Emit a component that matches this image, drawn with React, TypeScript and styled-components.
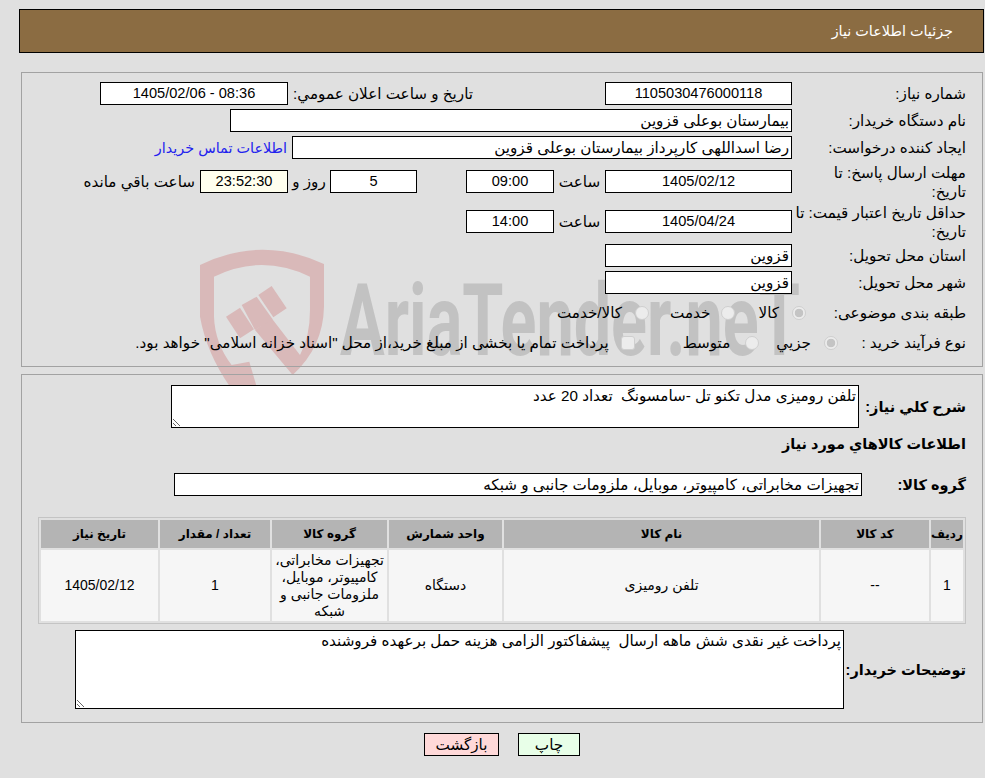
import React from "react";
import styled, { createGlobalStyle } from "styled-components";

const Global = createGlobalStyle`
  html, body { margin: 0; padding: 0; background: #e0e0e0; }
  body { font-family: "Liberation Sans", "DejaVu Sans", sans-serif; font-size: 15.2px; color: #000; }
`;

const Page = styled.div`
  position: relative;
  width: 985px;
  height: 778px;
  overflow: hidden;
  direction: rtl;
  background: #e0e0e0;
`;

const Watermark = styled.svg`
  position: absolute;
  left: 190px;
  top: 240px;
  z-index: 0;
`;

const Content = styled.div`
  position: relative;
  z-index: 1;
  display: flex;
  flex-direction: column;
  padding-top: 9px;
`;

const Header = styled.header`
  height: 42px;
  margin: 0 1px 0 19px;
  padding-right: 30px;
  border: 1px solid #000;
  background: #8b6c42;
  color: #fff;
  font-size: 14.4px;
  line-height: 43px;
`;

const Panel = styled.section<{ $h: number; $top: number; $pt: number }>`
  box-sizing: border-box;
  height: ${(p) => p.$h}px;
  margin: ${(p) => p.$top}px 2px 0 21px;
  padding: ${(p) => p.$pt}px 16px 0 17px;
  border: 1px solid #a2a2a2;
`;

const Row = styled.div<{ $h?: number; $mb?: number; $mt?: number }>`
  display: flex;
  align-items: center;
  height: ${(p) => p.$h || 23}px;
  margin-top: ${(p) => p.$mt ?? 0}px;
  margin-bottom: ${(p) => p.$mb ?? 4}px;
`;

const Label = styled.div<{ $w?: number }>`
  flex: none;
  width: ${(p) => p.$w ?? 174}px;
  line-height: 19px;
  white-space: nowrap;
`;

const BoldLabel = styled.div<{ $w: number }>`
  flex: none;
  width: ${(p) => p.$w}px;
  font-size: 14.5px;
  font-weight: 700;
  white-space: nowrap;
`;

const Field = styled.div<{ $w: number; $center?: boolean; $ms?: number; $bg?: string }>`
  flex: none;
  box-sizing: border-box;
  width: ${(p) => p.$w}px;
  height: 23px;
  margin-inline-start: ${(p) => p.$ms ?? 0}px;
  padding: 0 2px;
  border: 1px solid #000;
  background: ${(p) => p.$bg || "#fff"};
  font-size: ${(p) => (p.$center ? 14.6 : 15.2)}px;
  line-height: 21px;
  text-align: ${(p) => (p.$center ? "center" : "right")};
  white-space: nowrap;
  overflow: hidden;
`;

const Inline = styled.span<{ $w?: number; $ms?: number; $center?: boolean }>`
  flex: none;
  width: ${(p) => (p.$w ? `${p.$w}px` : "auto")};
  margin-inline-start: ${(p) => p.$ms ?? 0}px;
  text-align: ${(p) => (p.$center ? "center" : "right")};
  white-space: nowrap;
`;

const ContactLink = styled.a`
  margin-inline-start: 5px;
  color: #2222ee;
  font-size: 14.4px;
  text-decoration: none;
  white-space: nowrap;
`;

const Radio = styled.input<{ $ms?: number }>`
  flex: none;
  appearance: none;
  box-sizing: border-box;
  width: 14px;
  height: 14px;
  margin: 0;
  margin-inline-start: ${(p) => p.$ms ?? 0}px;
  border: 1px solid #cfcfcf;
  border-radius: 50%;
  background: #ececec;
  &:checked {
    background: radial-gradient(circle, #c4c4c4 0 4px, #ececec 4.6px);
  }
  &[type="checkbox"] {
    border-radius: 3px;
  }
`;

const NoteArea = styled.textarea<{ $w: number; $h: number }>`
  flex: none;
  box-sizing: border-box;
  display: block;
  width: ${(p) => p.$w}px;
  height: ${(p) => p.$h}px;
  padding: 1px 2px;
  border: 1px solid #000;
  border-radius: 0;
  outline: none;
  background: #fff;
  color: #000;
  font: inherit;
  direction: rtl;
`;

const SectionTitle = styled.h2`
  margin: 0;
  height: 22px;
  font-size: 14.5px;
  line-height: 22px;
  font-weight: 700;
`;

const Table = styled.table`
  box-sizing: border-box;
  width: 928px;
  table-layout: fixed;
  border: 1px solid #c4c4c4;
  border-spacing: 2px;
  font-size: 14px;
`;

const Th = styled.th<{ $w: number }>`
  width: ${(p) => p.$w}px;
  height: 28px;
  padding: 0;
  background: #b4b4b4;
  font-size: 12px;
  font-weight: 700;
`;

const Td = styled.td`
  height: 71px;
  padding: 0;
  background: #f6f6f6;
  text-align: center;
  line-height: 17px;
`;

const Actions = styled.div`
  display: flex;
  justify-content: center;
  gap: 19px;
  margin-top: 10px;
  padding-left: 19px;
`;

const ActionButton = styled.button<{ $w: number; $bg: string }>`
  box-sizing: border-box;
  width: ${(p) => p.$w}px;
  height: 23px;
  padding: 0;
  border: 1px solid #000;
  border-radius: 0;
  background: ${(p) => p.$bg};
  color: #000;
  font: inherit;
`;

const columns: [string, number][] = [
  ["ردیف", 32],
  ["کد کالا", 108],
  ["نام کالا", 315],
  ["واحد شمارش", 113],
  ["گروه کالا", 115],
  ["تعداد / مقدار", 110],
  ["تاریخ نیاز", 117],
];

export default function App() {
  return (
    <Page>
      <Global />
      <Watermark width={620} height={150} viewBox="0 0 620 150" aria-hidden="true">
        <g transform="scale(0.3333)" fill="#d9b9b9">
          <path d="M30 75 Q215 -15 402 72 L402 200 Q400 320 308 405 L195 270 L245 235 L330 345 Q360 290 360 210 L360 110 Q215 40 72 110 L72 230 Q75 310 125 375 L178 365 L200 440 L120 440 Q50 340 30 230 Z" />
          <path d="M108 230 L150 203 L192 268 L150 295 Z" />
          <path d="M155 195 L200 170 L248 238 L195 270 Z" />
          <path d="M205 165 L245 138 L290 205 L250 232 Z" />
        </g>
        <text x={150} y={115} fontFamily="Roboto, sans-serif" fontWeight={700} fontSize={100} fill="#c2c2c2" textLength={460} lengthAdjust="spacingAndGlyphs" style={{ direction: "ltr" }}>
          AriaTender.neT
        </text>
      </Watermark>
      <Content>
        <Header>جزئیات اطلاعات نیاز</Header>

        <Panel $h={295} $top={19} $pt={9}>
          <Row>
            <Label>شماره نیاز:</Label>
            <Field $w={187} $center>1105030476000118</Field>
            <Inline $w={180} $ms={132}>تاریخ و ساعت اعلان عمومي:</Inline>
            <Field $w={188} $center $ms={5}>08:36 - 1405/02/06</Field>
          </Row>
          <Row>
            <Label>نام دستگاه خریدار:</Label>
            <Field $w={562}>بیمارستان بوعلی قزوین</Field>
          </Row>
          <Row $mb={11}>
            <Label>ایجاد کننده درخواست:</Label>
            <Field $w={500}>رضا اسداللهی کارپرداز بیمارستان بوعلی قزوین</Field>
            <ContactLink href="#">اطلاعات تماس خریدار</ContactLink>
          </Row>
          <Row $mb={17}>
            <Label>مهلت ارسال پاسخ: تا<br />تاریخ:</Label>
            <Field $w={187} $center>1405/02/12</Field>
            <Inline $w={51} $center>ساعت</Inline>
            <Field $w={88} $center>09:00</Field>
            <Field $w={87} $center $ms={49}>5</Field>
            <Inline $w={42} $center>روز و</Inline>
            <Field $w={88} $center $bg="#ffffee">23:52:30</Field>
            <Inline $ms={5}>ساعت باقي مانده</Inline>
          </Row>
          <Row $mb={11}>
            <Label>حداقل تاریخ اعتبار قیمت: تا<br />تاریخ:</Label>
            <Field $w={187} $center>1405/04/24</Field>
            <Inline $w={51} $center>ساعت</Inline>
            <Field $w={88} $center>14:00</Field>
          </Row>
          <Row>
            <Label>استان محل تحویل:</Label>
            <Field $w={187}>قزوین</Field>
          </Row>
          <Row $mb={7}>
            <Label>شهر محل تحویل:</Label>
            <Field $w={187}>قزوین</Field>
          </Row>
          <Row $mb={7}>
            <Label $w={160}>طبقه بندی موضوعی:</Label>
            <Radio type="radio" name="cat" checked disabled readOnly />
            <Inline $ms={13}>کالا</Inline>
            <Radio type="radio" name="cat" disabled $ms={23} />
            <Inline $ms={11}>خدمت</Inline>
            <Radio type="radio" name="cat" disabled $ms={21} />
            <Inline $ms={13}>کالا/خدمت</Inline>
          </Row>
          <Row>
            <Label $w={128}>نوع فرآیند خرید :</Label>
            <Radio type="radio" name="kind" checked disabled readOnly />
            <Inline $ms={13}>جزیي</Inline>
            <Radio type="radio" name="kind" disabled $ms={17} />
            <Inline $ms={15}>متوسط</Inline>
            <Radio type="checkbox" disabled $ms={48} />
            <Inline $ms={12}>پرداخت تمام یا بخشی از مبلغ خرید،از محل "اسناد خزانه اسلامی" خواهد بود.</Inline>
          </Row>
        </Panel>

        <Panel $h={349} $top={7} $pt={10}>
          <Row $h={43} $mb={5}>
            <BoldLabel $w={107}>شرح کلي نیاز:</BoldLabel>
            <NoteArea $w={688} $h={43} readOnly value="تلفن رومیزی مدل تکنو تل -سامسونگ  تعداد 20 عدد" />
          </Row>
          <SectionTitle>اطلاعات کالاهاي مورد نیاز</SectionTitle>
          <Row $mt={18} $mb={21}>
            <BoldLabel $w={104}>گروه کالا:</BoldLabel>
            <Field $w={688}>تجهیزات مخابراتی، کامپیوتر، موبایل، ملزومات جانبی و شبکه</Field>
          </Row>
          <Table>
            <thead>
              <tr>
                {columns.map(([title, w]) => (
                  <Th key={title} $w={w}>{title}</Th>
                ))}
              </tr>
            </thead>
            <tbody>
              <tr>
                <Td>1</Td>
                <Td>--</Td>
                <Td>تلفن رومیزی</Td>
                <Td>دستگاه</Td>
                <Td>تجهیزات مخابراتی، کامپیوتر، موبایل، ملزومات جانبی و شبکه</Td>
                <Td>1</Td>
                <Td>1405/02/12</Td>
              </tr>
            </tbody>
          </Table>
          <Row $h={79} $mb={0} $mt={6}>
            <BoldLabel $w={122}>توضیحات خریدار:</BoldLabel>
            <NoteArea $w={769} $h={79} readOnly value="پرداخت غیر نقدی شش ماهه ارسال  پیشفاکتور الزامی هزینه حمل برعهده فروشنده" />
          </Row>
        </Panel>

        <Actions>
          <ActionButton $w={62} $bg="#e8ffe8">چاپ</ActionButton>
          <ActionButton $w={75} $bg="#ffd9d9">بازگشت</ActionButton>
        </Actions>
      </Content>
    </Page>
  );
}
